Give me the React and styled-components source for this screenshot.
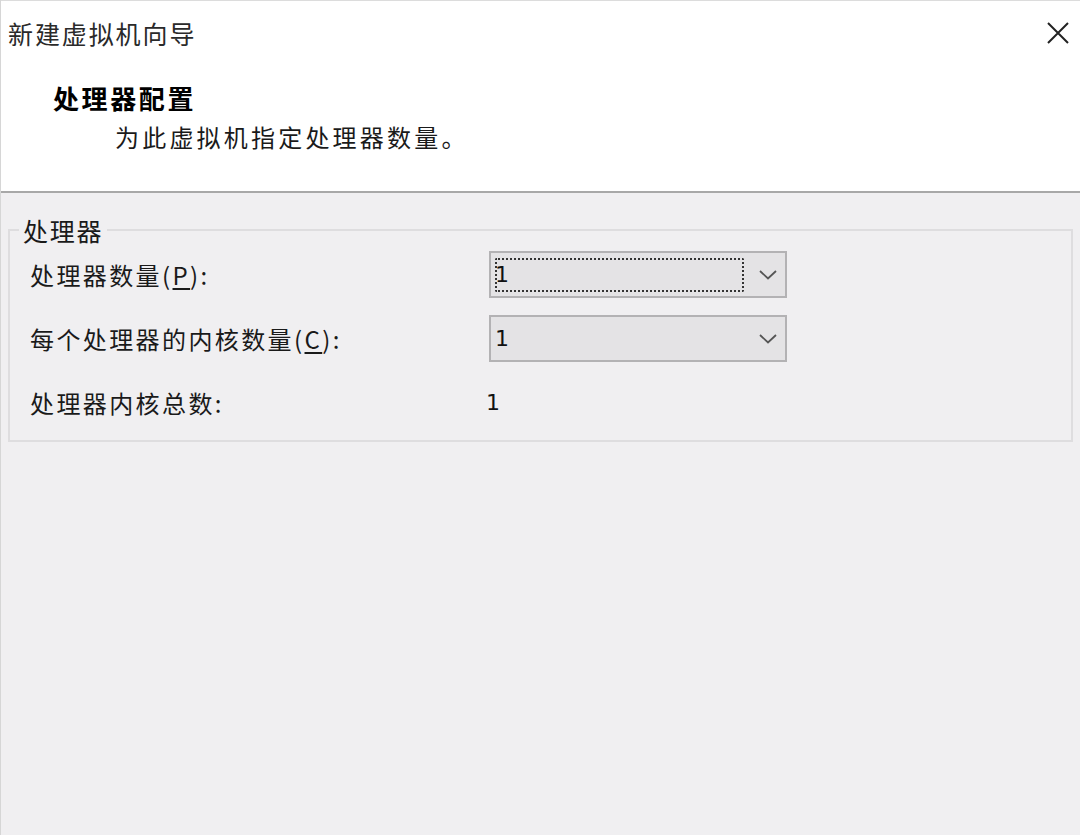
import React from 'react';
import styled, { createGlobalStyle } from 'styled-components';

const Global = createGlobalStyle`
  html, body {
    margin: 0;
    padding: 0;
    background: #f0eff1;
  }
  body {
    font-family: "Noto Sans CJK SC", "Noto Sans", sans-serif;
    color: #1a1a1a;
  }
`;

const Window = styled.div`
  width: 1080px;
  height: 835px;
  display: flex;
  flex-direction: column;
  background: #f0eff1;
  border-left: 1px solid #d6d6d6;
  box-sizing: border-box;
  overflow: hidden;
`;

const Header = styled.header`
  height: 190px;
  background: #ffffff;
  border-bottom: 2px solid #a8a8a8;
  border-top: 1px solid #dcdcdc;
  box-sizing: content-box;
  display: flex;
  flex-direction: column;
`;

const TitleBar = styled.div`
  display: flex;
  align-items: center;
  justify-content: space-between;
  height: 36px;
  margin-top: 14px;
  padding: 0 8px 0 7px;
`;

const Title = styled.span`
  font-size: 25px;
  line-height: 36px;
  color: #2a2a2a;
  letter-spacing: 1.9px;
`;

const Close = styled.button`
  border: none;
  background: none;
  padding: 0;
  width: 28px;
  height: 28px;
  display: flex;
  align-items: center;
  justify-content: center;
  cursor: pointer;
`;

const Heading = styled.h1`
  margin: 30px 0 0 52px;
  font-size: 26px;
  line-height: 34px;
  font-weight: 700;
  letter-spacing: 2.6px;
  color: #000;
`;

const Sub = styled.p`
  margin: 6px 0 0 114px;
  font-size: 24px;
  line-height: 32px;
  letter-spacing: 3.2px;
  color: #1a1a1a;
`;

const Group = styled.fieldset`
  margin: 22px 7px 0 7px;
  padding: 6px 0 0 0;
  height: 227px;
  box-sizing: border-box;
  border: 2px solid #dedddf;
  min-width: 0;
`;

const Legend = styled.legend`
  margin-left: 9px;
  padding: 0 4px;
  font-size: 25px;
  line-height: 30px;
  letter-spacing: 1.8px;
  color: #1a1a1a;
`;

const Rows = styled.div`
  display: grid;
  grid-template-columns: 479px 298px;
  grid-auto-rows: 47px;
  row-gap: 17px;
`;

const Label = styled.span`
  display: flex;
  align-items: center;
  padding-left: 20px;
  font-size: 24px;
  letter-spacing: 2.4px;
  color: #1a1a1a;
  u {
    text-decoration: underline;
    text-underline-offset: 3px;
  }
`;

const Combo = styled.div`
  display: flex;
  align-items: center;
  justify-content: space-between;
  box-sizing: border-box;
  height: 47px;
  background: #e4e3e5;
  border: 2px solid #b3b2b4;
  padding: 0 8px 0 4px;
`;

const ComboValue = styled.span`
  display: flex;
  align-items: center;
  height: 34px;
  width: 249px;
  box-sizing: border-box;
  padding-left: 0;
  font-family: "DejaVu Sans", sans-serif;
  font-size: 22px;
  color: #111;
  outline: ${p => (p.$focus ? '2px dotted #333' : 'none')};
  outline-offset: -2px;
  border-radius: 2px;
`;

const Value = styled.span`
  display: flex;
  align-items: center;
  margin-left: -3px;
  font-family: "DejaVu Sans", sans-serif;
  font-size: 22px;
  color: #111;
`;

const Chevron = () => (
  <svg width="18" height="10" viewBox="0 0 18 10">
    <path d="M1 1 L9 8.5 L17 1" fill="none" stroke="#555" strokeWidth="1.8" />
  </svg>
);

export default function App() {
  return (
    <>
      <Global />
      <Window>
        <Header>
          <TitleBar>
            <Title>新建虚拟机向导</Title>
            <Close aria-label="关闭">
              <svg width="24" height="24" viewBox="0 0 24 24">
                <path d="M2 2 L22 22 M22 2 L2 22" stroke="#222" strokeWidth="2" />
              </svg>
            </Close>
          </TitleBar>
          <Heading>处理器配置</Heading>
          <Sub>为此虚拟机指定处理器数量。</Sub>
        </Header>

        <Group>
          <Legend>处理器</Legend>
          <Rows>
            <Label>
              处理器数量(<u>P</u>):
            </Label>
            <Combo>
              <ComboValue $focus>1</ComboValue>
              <Chevron />
            </Combo>

            <Label>
              每个处理器的内核数量(<u>C</u>):
            </Label>
            <Combo>
              <ComboValue>1</ComboValue>
              <Chevron />
            </Combo>

            <Label>处理器内核总数:</Label>
            <Value>1</Value>
          </Rows>
        </Group>
      </Window>
    </>
  );
}
